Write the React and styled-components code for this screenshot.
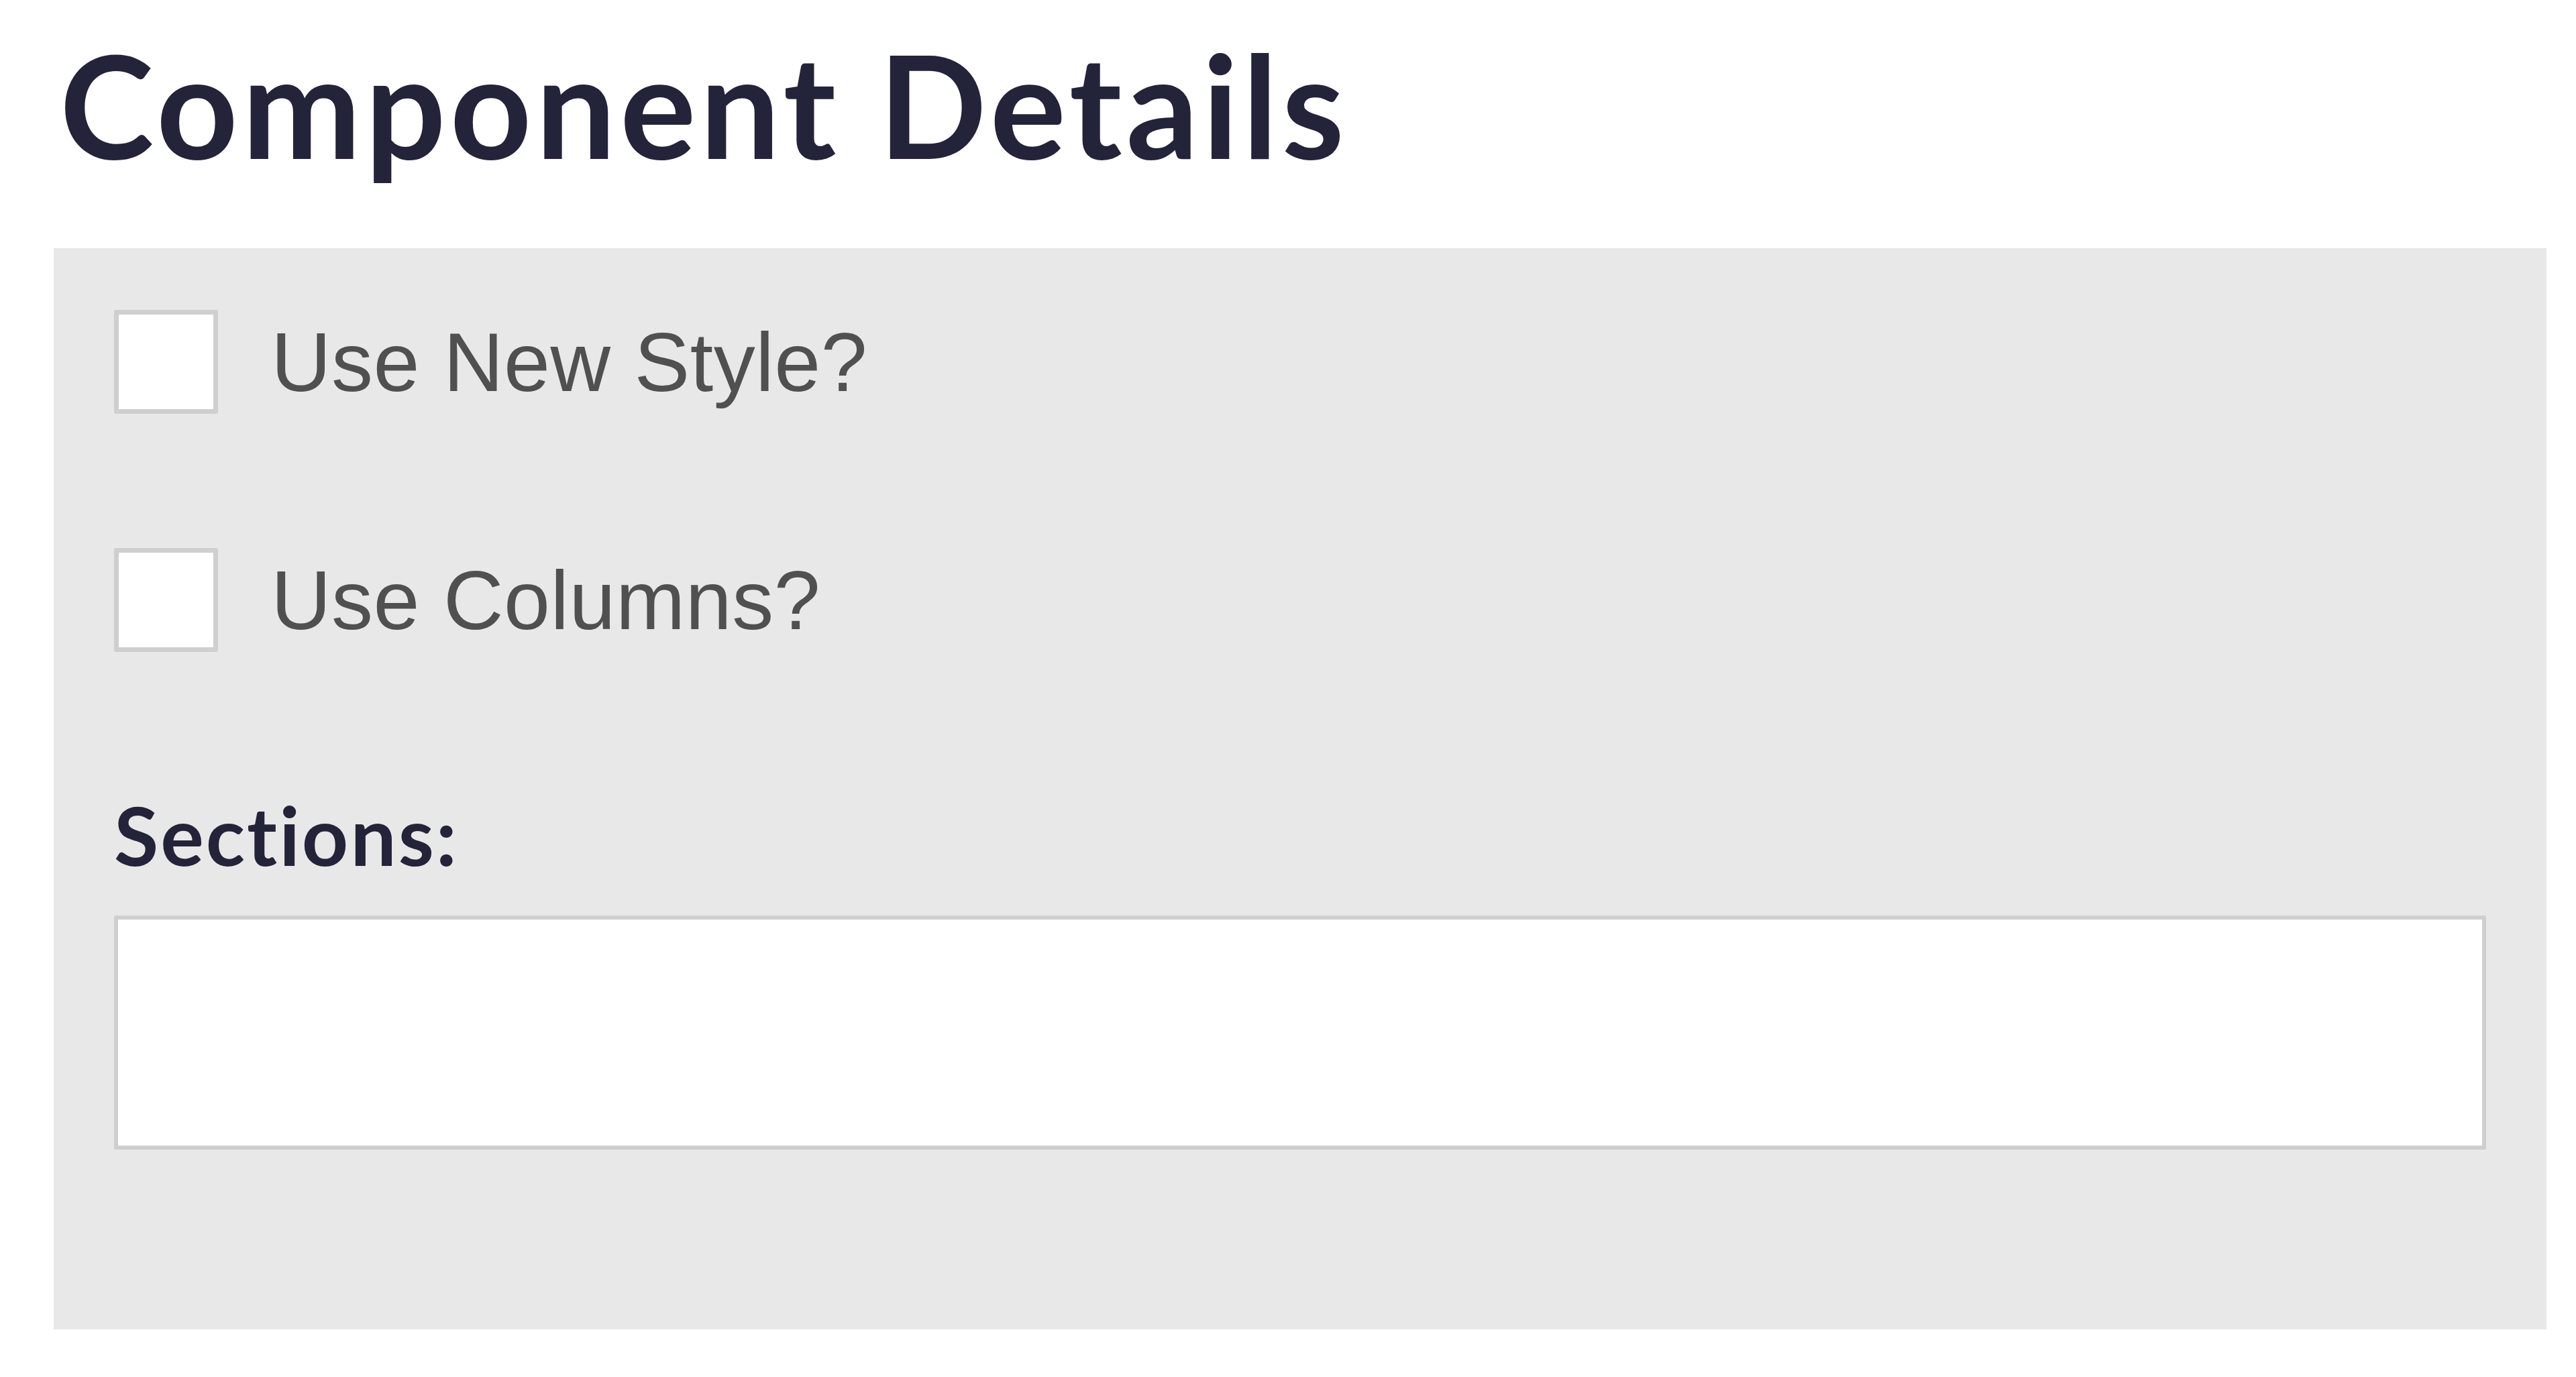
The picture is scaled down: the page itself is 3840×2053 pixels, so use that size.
import React from "react";
import styled, { createGlobalStyle } from "styled-components";

const GlobalStyle = createGlobalStyle`
  html, body {
    margin: 0;
    padding: 0;
    background: #ffffff;
  }
  * {
    box-sizing: border-box;
  }
`;

const Page = styled.div`
  padding-top: 28px;
`;

const Title = styled.h1`
  margin: 0 0 88px 89px;
  font-family: Lato, "Open Sans", sans-serif;
  font-weight: 700;
  font-size: 212px;
  line-height: 1.2;
  letter-spacing: 6px;
  font-variant-ligatures: none;
  color: #23243a;
`;

const Panel = styled.div`
  display: flex;
  flex-direction: column;
  gap: 200px;
  margin: 0 44px 72px 80px;
  padding: 92px 90px 268px 90px;
  background: #e8e8e8;
`;

const CheckRow = styled.label`
  display: flex;
  align-items: center;
  gap: 79px;
  cursor: pointer;
`;

const Box = styled.input.attrs({ type: "checkbox" })`
  appearance: none;
  flex: none;
  width: 155px;
  height: 155px;
  margin: 0;
  background: #ffffff;
  border: 7px solid #cfcfcf;
  border-radius: 3px;
`;

const CheckText = styled.span`
  font-family: "Liberation Sans", Arial, sans-serif;
  font-size: 124px;
  letter-spacing: 0.5px;
  color: #505050;
`;

const Field = styled.div`
  display: flex;
  flex-direction: column;
  gap: 47px;
`;

const FieldLabel = styled.label`
  font-family: Lato, "Open Sans", sans-serif;
  font-weight: 700;
  font-size: 121px;
  line-height: 1.2;
  letter-spacing: 3px;
  font-variant-ligatures: none;
  color: #23243a;
`;

const TextBox = styled.input`
  width: 100%;
  height: 349px;
  margin: 0;
  background: #ffffff;
  border: 6px solid #cfcfcf;
  border-radius: 2px;
  outline: none;
`;

const options = ["Use New Style?", "Use Columns?"];

export default function App() {
  return (
    <Page>
      <GlobalStyle />
      <Title>Component Details</Title>
      <Panel>
        {options.map((text) => (
          <CheckRow key={text}>
            <Box />
            <CheckText>{text}</CheckText>
          </CheckRow>
        ))}
        <Field>
          <FieldLabel htmlFor="sections">Sections:</FieldLabel>
          <TextBox id="sections" type="text" />
        </Field>
      </Panel>
    </Page>
  );
}
